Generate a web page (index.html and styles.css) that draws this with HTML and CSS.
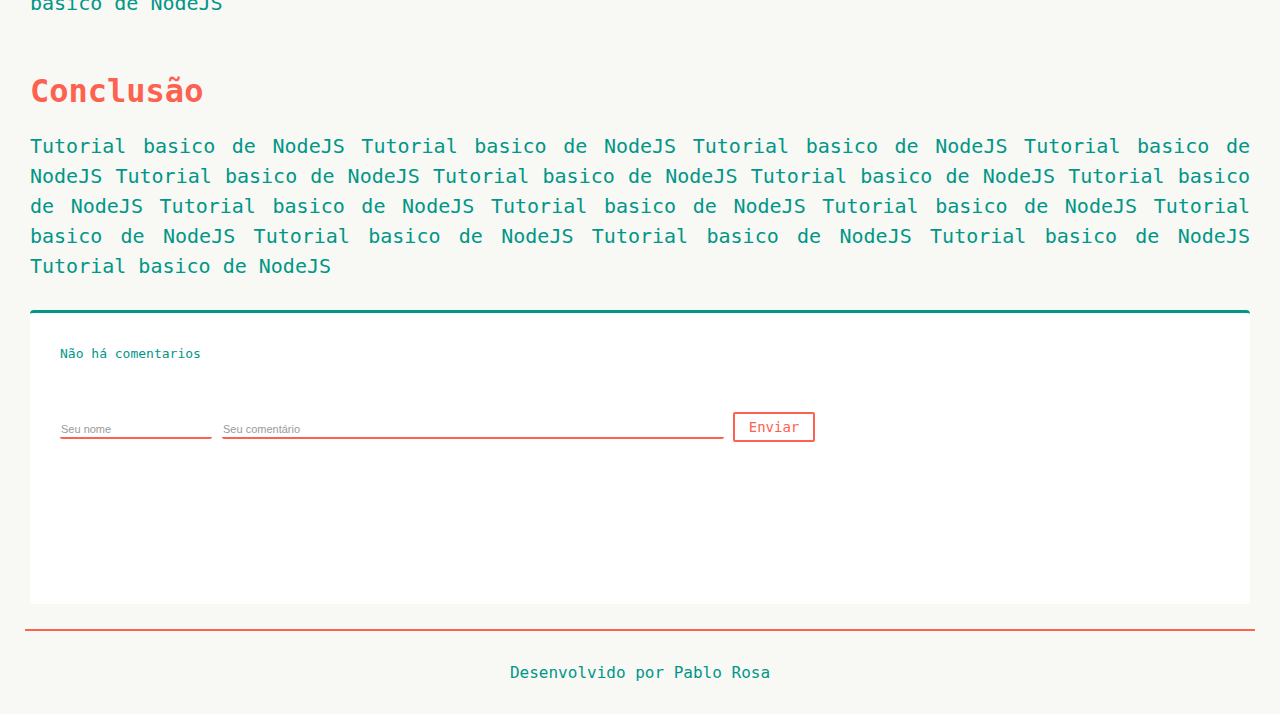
FILE: index.html
```html
<!DOCTYPE html>
<html lang="pt">
<head>
<meta charset="utf-8">
<title>Tutorial basico de NodeJS</title>
<link rel="stylesheet" href="styles.css">
</head>
<body>
<main class="content">
  <p class="text prev">basico de NodeJS</p>
  <h2 class="title">Conclusão</h2>
  <p class="text">Tutorial basico de NodeJS Tutorial basico de NodeJS Tutorial basico de NodeJS Tutorial basico de NodeJS Tutorial basico de NodeJS Tutorial basico de NodeJS Tutorial basico de NodeJS Tutorial basico de NodeJS Tutorial basico de NodeJS Tutorial basico de NodeJS Tutorial basico de NodeJS Tutorial basico de NodeJS Tutorial basico de NodeJS Tutorial basico de NodeJS Tutorial basico de NodeJS Tutorial basico de NodeJS</p>
  <section class="comments">
    <p class="empty">Não há comentarios</p>
    <form class="comment-form">
      <input class="field field-name" type="text" placeholder="Seu nome">
      <input class="field field-comment" type="text" placeholder="Seu comentário">
      <button class="send" type="button">Enviar</button>
    </form>
  </section>
</main>
<footer class="footer">
  <p class="credit">Desenvolvido por Pablo Rosa</p>
</footer>
</body>
</html>
```

FILE: styles.css
```css
html, body {
  margin: 0;
  padding: 0;
  background: #f8f8f4;
}
body {
  font-family: "DejaVu Sans Mono", "Liberation Mono", monospace;
  color: #009688;
  overflow: hidden;
}
.content {
  padding: 0 30px;
}
.text {
  font-size: 20px;
  line-height: 30px;
  text-align: justify;
  margin: 0;
  color: #009688;
}
.prev {
  margin-top: -12px;
}
.title {
  font-size: 32px;
  line-height: 40px;
  font-weight: bold;
  color: #fd6150;
  margin: 53px 0 20px;
}
.comments {
  margin-top: 29px;
  background: #ffffff;
  border-top: 3px solid #009688;
  border-radius: 4px;
  box-sizing: border-box;
  min-height: 294px;
  padding: 31px 30px 20px;
}
.empty {
  margin: 0;
  font-size: 13px;
  line-height: 20px;
}
.comment-form {
  display: flex;
  align-items: flex-end;
  margin-top: 48px;
}
.field {
  border: none;
  border-bottom: 2px solid #fd6150;
  border-radius: 0 0 2px 2px;
  background: transparent;
  font-family: "Liberation Sans", Arial, sans-serif;
  font-size: 11px;
  color: #555;
  padding: 0 1px;
  height: 18px;
  box-sizing: border-box;
  margin-bottom: 3px;
  outline: none;
}
.field::placeholder {
  color: #9a9a9a;
}
.field-name {
  width: 152px;
  margin-right: 10px;
}
.field-comment {
  width: 502px;
  margin-right: 9px;
}
.send {
  width: 82px;
  height: 30px;
  box-sizing: border-box;
  border: 2px solid #fd6150;
  border-radius: 2px;
  background: #fff;
  color: #fd6150;
  font-family: "DejaVu Sans Mono", "Liberation Mono", monospace;
  font-size: 14px;
  padding: 0;
}
.footer {
  margin: 25px 25px 0;
  border-top: 2px solid #fd6150;
}
.credit {
  margin: 0;
  padding-top: 30px;
  text-align: center;
  font-size: 16px;
  line-height: 24px;
}
```
